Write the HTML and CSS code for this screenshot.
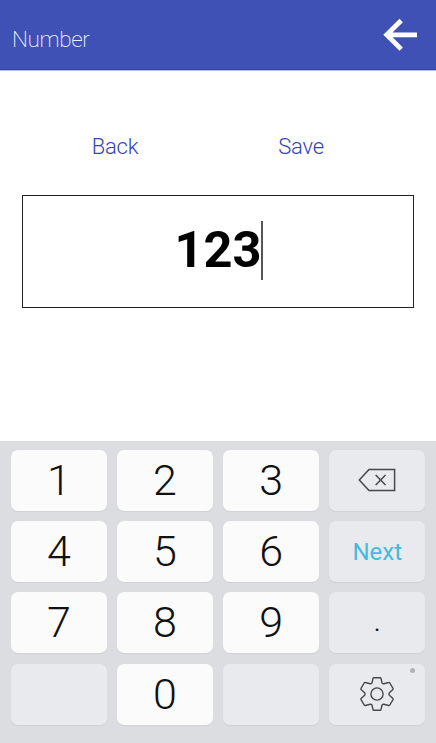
FILE: index.html
```html
<!DOCTYPE html>
<html lang="en">
<head>
<meta charset="utf-8">
<title>Number</title>
<link rel="stylesheet" href="styles.css">
</head>
<body>
<header class="bar">
  <h1 class="title">Number</h1>
  <svg class="arrow" width="34" height="34" viewBox="0 0 34 34"><path d="M34 16.8H4M18.2 2.5L3.7 16.8l14.5 14.3" fill="none" stroke="#fff" stroke-width="4.8"/></svg>
</header>
<main class="content">
  <nav class="actions"><a class="action">Back</a><a class="action">Save</a></nav>
  <div class="field"><span class="value">123</span><span class="caret"></span></div>
</main>
<section class="keypad">
  <div class="key">1</div><div class="key">2</div><div class="key">3</div>
  <div class="key soft"><svg width="38" height="24" viewBox="0 0 38 24" fill="none" stroke="#484848" stroke-width="1.5"><path d="M1.3 12L11 1.4h25.6v21.2H11zM17.7 7l9.8 10M27.5 7l-9.8 10"/></svg></div>
  <div class="key">4</div><div class="key">5</div><div class="key">6</div>
  <div class="key soft next">Next</div>
  <div class="key">7</div><div class="key">8</div><div class="key">9</div>
  <div class="key soft"><span class="point">.</span></div>
  <div class="key soft"></div><div class="key">0</div><div class="key soft"></div>
  <div class="key soft"><svg width="36" height="36" viewBox="-18 -18 36 36" fill="none" stroke="#484848" stroke-width="1.4" stroke-linejoin="round"><path d="M-3.2-16.3H3.2Q3.8-16.3 4-15.6L4.9-11.5Q5.3-10 6.8-10.3L11.7-11.5Q12.4-11.7 12.8-11L16-5.6Q16.4-5 15.9-4.5L12.4-1.2Q11.3 0 12.4 1.2L15.9 4.5Q16.4 5 16 5.6L12.8 11Q12.4 11.7 11.7 11.5L6.8 10.3Q5.3 10 4.9 11.5L4 15.6Q3.8 16.3 3.2 16.3H-3.2Q-3.8 16.3-4 15.6L-4.9 11.5Q-5.3 10-6.8 10.3L-11.7 11.5Q-12.4 11.7-12.8 11L-16 5.6Q-16.4 5-15.9 4.5L-12.4 1.2Q-11.3 0-12.4-1.2L-15.9-4.5Q-16.4-5-16-5.6L-12.8-11Q-12.4-11.7-11.7-11.5L-6.8-10.3Q-5.3-10-4.9-11.5L-4-15.6Q-3.8-16.3-3.2-16.3Z"/><circle r="6.1"/></svg><span class="badge"></span></div>
</section>
</body>
</html>
```
FILE: styles.css
```css
* { box-sizing: border-box; }
body {
  margin: 0;
  height: 743px;
  display: flex;
  flex-direction: column;
  overflow: hidden;
  background: #fff;
  font-family: Roboto, "Liberation Sans", sans-serif;
}
.bar {
  height: 70px;
  flex: none;
  display: flex;
  justify-content: space-between;
  align-items: flex-start;
  padding: 18px 19px 0 12px;
  background: #3f51b5;
  border-bottom: 1px solid #3747a8;
}
.title {
  margin: 8px 0 0;
  font-size: 22.5px;
  letter-spacing: -0.4px;
  line-height: 27px;
  font-weight: 200;
  color: #f0f2fb;
}
.content {
  flex: none;
  height: 371px;
  padding: 63px 22px 0;
  border-top: 1px solid #b3bae3;
}
.actions {
  display: flex;
  height: 28px;
}
.action {
  width: 186px;
  text-align: center;
  font-size: 22px;
  letter-spacing: -0.2px;
  line-height: 26px;
  font-weight: 300;
  color: #3345b3;
}
.field {
  margin-top: 33px;
  height: 113px;
  display: flex;
  justify-content: center;
  align-items: flex-start;
  padding: 25px 0 0 2px;
  border: 1px solid #222;
  color: #000;
}
.value {
  margin-top: -1px;
  font-size: 50.5px;
  line-height: 60px;
  font-weight: 700;
}
.caret {
  width: 2px;
  height: 59px;
  background: #555;
}
.keypad {
  flex: 1;
  display: grid;
  grid-template-columns: repeat(4, 1fr);
  grid-template-rows: repeat(4, 61px);
  gap: 10.33px 10.5px;
  padding: 8.8px 11px 0;
  background: #dcdde1;
}
.key {
  position: relative;
  display: flex;
  justify-content: center;
  align-items: center;
  border-radius: 7px;
  background: #fbfbfb;
  box-shadow: 0 1px 1px #d0d1d5;
  font-size: 43px;
  line-height: 61px;
  font-weight: 300;
  color: #111;
}
.soft { background: #e9eaee; }
.next {
  padding-top: 1px;
  font-size: 24px;
  font-weight: 400;
  color: #45b9e1;
}
.point { padding-top: 2px; font-size: 24px; font-weight: 400; }
.badge {
  position: absolute;
  top: 4px;
  right: 10px;
  width: 5px;
  height: 5px;
  border-radius: 50%;
  background: #b2b3b7;
}
```
